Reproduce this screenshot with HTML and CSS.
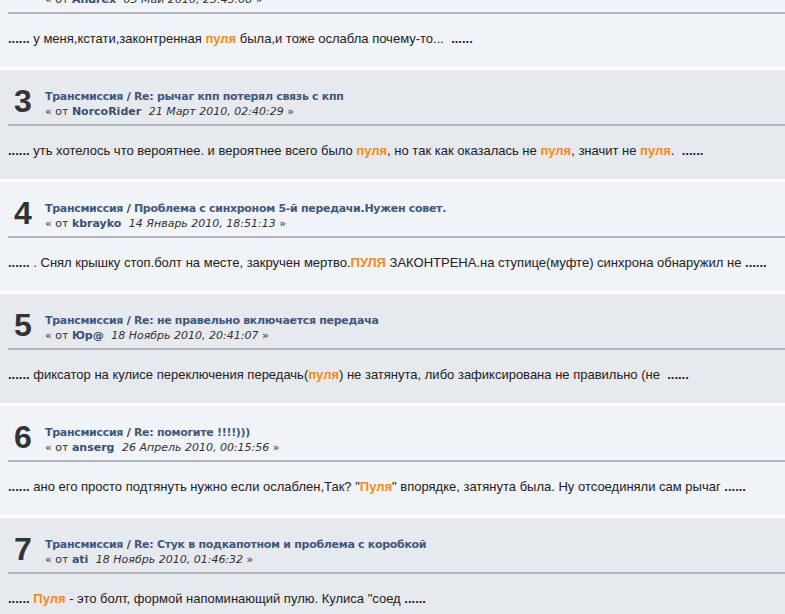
FILE: index.html
```html
<!DOCTYPE html>
<html lang="ru">
<head>
    <meta charset="UTF-8">
    <title>Результаты поиска</title>
    <link rel="stylesheet" href="styles.css">
</head>
<body>

<div id="results">

    <div class="result light">
        <div class="topic">
            <div class="counter">2</div>
            <div class="topic_details">
                <h5><a href="#">Трансмиссия</a> / <a href="#">Re: рычаг кпп</a></h5>
                <span class="smalltext">« от <a href="#" class="author">Andrex</a> <em>05 Май 2010, 23:45:08</em> »</span>
            </div>
        </div>
        <div class="list_posts">
            <b>......</b> у меня,кстати,законтренная <span class="hl">пуля</span> была,и тоже ослабла почему-то...&nbsp; <b>......</b>
        </div>
    </div>

    <div class="result dark">
        <div class="topic">
            <div class="counter">3</div>
            <div class="topic_details">
                <h5><a href="#">Трансмиссия</a> / <a href="#">Re: рычаг кпп потерял связь с кпп</a></h5>
                <span class="smalltext">« от <a href="#" class="author">NorcoRider</a> <em>21 Март 2010, 02:40:29</em> »</span>
            </div>
        </div>
        <div class="list_posts">
            <b>......</b> уть хотелось что вероятнее. и вероятнее всего было <span class="hl">пуля</span>, но так как оказалась не <span class="hl">пуля</span>, значит не <span class="hl">пуля</span>.&nbsp; <b>......</b>
        </div>
    </div>

    <div class="result light">
        <div class="topic">
            <div class="counter">4</div>
            <div class="topic_details">
                <h5><a href="#">Трансмиссия</a> / <a href="#">Проблема с синхроном 5-й передачи.Нужен совет.</a></h5>
                <span class="smalltext">« от <a href="#" class="author">kbrayko</a> <em>14 Январь 2010, 18:51:13</em> »</span>
            </div>
        </div>
        <div class="list_posts">
            <b>......</b> . Снял крышку стоп.болт на месте, закручен мертво.<span class="hl">ПУЛЯ</span> ЗАКОНТРЕНА.на ступице(муфте) синхрона обнаружил не <b>......</b>
        </div>
    </div>

    <div class="result dark">
        <div class="topic">
            <div class="counter">5</div>
            <div class="topic_details">
                <h5><a href="#">Трансмиссия</a> / <a href="#">Re: не правельно включается передача</a></h5>
                <span class="smalltext">« от <a href="#" class="author">Юр@</a> <em>18 Ноябрь 2010, 20:41:07</em> »</span>
            </div>
        </div>
        <div class="list_posts">
            <b>......</b> фиксатор на кулисе переключения передачь(<span class="hl">пуля</span>) не затянута, либо зафиксирована не правильно (не&nbsp; <b>......</b>
        </div>
    </div>

    <div class="result light">
        <div class="topic">
            <div class="counter">6</div>
            <div class="topic_details">
                <h5><a href="#">Трансмиссия</a> / <a href="#">Re: помогите !!!!)))</a></h5>
                <span class="smalltext">« от <a href="#" class="author">anserg</a> <em>26 Апрель 2010, 00:15:56</em> »</span>
            </div>
        </div>
        <div class="list_posts">
            <b>......</b> ано его просто подтянуть нужно если ослаблен,Так? "<span class="hl">Пуля</span>" впорядке, затянута была. Ну отсоединяли сам рычаг <b>......</b>
        </div>
    </div>

    <div class="result dark">
        <div class="topic">
            <div class="counter">7</div>
            <div class="topic_details">
                <h5><a href="#">Трансмиссия</a> / <a href="#">Re: Стук в подкапотном и проблема с коробкой</a></h5>
                <span class="smalltext">« от <a href="#" class="author">ati</a> <em>18 Ноябрь 2010, 01:46:32</em> »</span>
            </div>
        </div>
        <div class="list_posts">
            <b>......</b> <span class="hl">Пуля</span> - это болт, формой напоминающий пулю. Кулиса "соед <b>......</b>
        </div>
    </div>

</div>

</body>
</html>
```

FILE: styles.css
```css
html,body{
    height: 100%;
}
*{margin: 0; padding: 0;}
body{
    background: #fff;
    color: #222;
    font-family: "Liberation Sans", Arial, sans-serif;
    overflow: hidden;
}
a{
    text-decoration: none;
}
#results{
    margin-top: -42px;
}
.result{
    margin-bottom: 3px;
}
.result.light{
    background: #f0f3f7;
}
.result.dark{
    background: #e6e9ee;
}
.result .topic{
    display: flex;
    align-items: flex-start;
    height: 35px;
    padding-top: 19px;
    margin-left: 8px;
    border-bottom: 2px solid #b3b7bd;
}
.result .counter{
    width: 31px;
    padding-left: 6px;
    margin-top: -4px;
    font-size: 32px;
    line-height: 32px;
    font-weight: bold;
    color: #333;
}
.result .topic_details{
    font-family: "DejaVu Sans", Verdana, sans-serif;
    font-size: 11px;
    line-height: 15px;
    color: #333;
}
.result h5{
    font-size: 11px;
    font-weight: bold;
    letter-spacing: -0.3px;
    color: #333;
}
.result h5 a{
    color: #42587a;
}
.result .smalltext{
    display: block;
    color: #333;
}
.result .smalltext .author{
    font-weight: bold;
    color: #3b4f6e;
}
.result .smalltext em{
    margin-left: 4px;
}
.list_posts{
    height: 36px;
    padding: 17px 0 0 8px;
    font-size: 13px;
    line-height: 16px;
    color: #222;
    white-space: nowrap;
}
.hl{
    color: #f28a22;
    font-weight: bold;
}
```
